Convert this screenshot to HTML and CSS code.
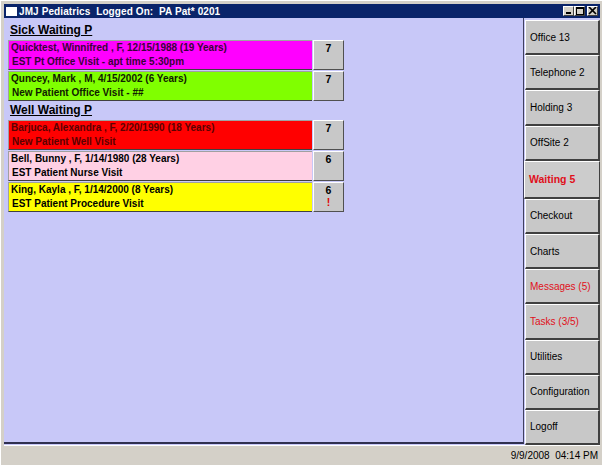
FILE: index.html
```html
<!DOCTYPE html>
<html>
<head>
<meta charset="utf-8">
<link rel="stylesheet" href="styles.css">
</head>
<body>
<div class="window">
  <div class="titlebar">
    <div class="title-left"><span class="appicon"></span><span class="title">JMJ Pediatrics&nbsp; Logged On:&nbsp; PA Pat* 0201</span></div>
    <div class="controls">
      <span class="ctl"><svg width="9" height="8" viewBox="0 0 9 8"><rect x="2" y="5" width="5" height="2" fill="#000"/></svg></span>
      <span class="ctl"><svg width="9" height="8" viewBox="0 0 9 8"><rect x="1.5" y="0.5" width="7" height="7" fill="none" stroke="#000"/><rect x="1" y="0" width="8" height="2" fill="#000"/></svg></span>
      <span class="ctl close"><svg width="9" height="8" viewBox="0 0 9 8"><path d="M1 0 L8 7 M8 0 L1 7" stroke="#000" stroke-width="1.7"/></svg></span>
    </div>
  </div>
  <div class="main">
    <div class="panel">
      <div class="heading">Sick Waiting P</div>
      <div class="row">
        <div class="info magenta"><div class="l1">Quicktest, Winnifred , F, 12/15/1988 (19 Years)</div><div class="l2">EST Pt Office Visit - apt time 5:30pm</div></div>
        <div class="count">7</div>
      </div>
      <div class="row">
        <div class="info green"><div class="l1">Quncey, Mark , M, 4/15/2002 (6 Years)</div><div class="l2">New Patient Office Visit - ##</div></div>
        <div class="count">7</div>
      </div>
      <div class="heading">Well Waiting P</div>
      <div class="row">
        <div class="info red"><div class="l1">Barjuca, Alexandra , F, 2/20/1990 (18 Years)</div><div class="l2">New Patient Well Visit</div></div>
        <div class="count">7</div>
      </div>
      <div class="row">
        <div class="info pink"><div class="l1">Bell, Bunny , F, 1/14/1980 (28 Years)</div><div class="l2">EST Patient Nurse Visit</div></div>
        <div class="count">6</div>
      </div>
      <div class="row">
        <div class="info yellow"><div class="l1">King, Kayla , F, 1/14/2000 (8 Years)</div><div class="l2">EST Patient Procedure Visit</div></div>
        <div class="count">6<span class="bang">!</span></div>
      </div>
    </div>
    <div class="nav">
      <div class="btn">Office 13</div>
      <div class="btn">Telephone 2</div>
      <div class="btn">Holding 3</div>
      <div class="btn">OffSite 2</div>
      <div class="btn active">Waiting 5</div>
      <div class="btn">Checkout</div>
      <div class="btn">Charts</div>
      <div class="btn alert">Messages (5)</div>
      <div class="btn alert">Tasks (3/5)</div>
      <div class="btn">Utilities</div>
      <div class="btn">Configuration</div>
      <div class="btn">Logoff</div>
    </div>
  </div>
  <div class="status"><span>9/9/2008&nbsp; 04:14 PM</span></div>
</div>
</body>
</html>
```
FILE: styles.css
```css
* { box-sizing: border-box; }
html, body { margin: 0; padding: 0; }
body {
  width: 602px;
  height: 465px;
  overflow: hidden;
  background: #d4d0c8;
  font-family: "Liberation Sans", Arial, sans-serif;
}
.window {
  width: 602px;
  height: 465px;
  display: flex;
  flex-direction: column;
  padding: 3px 2px 0 3px;
  background: #d4d0c8;
  border-left: 1px solid #ffffff;
  border-top: 1px solid #ffffff;
}
.titlebar {
  height: 14px;
  background: #0a246a;
  display: flex;
  align-items: center;
  justify-content: space-between;
  padding: 0 2px 0 2px;
  flex: none;
}
.title-left { display: flex; align-items: center; gap: 2px; }
.appicon {
  width: 11px;
  height: 9px;
  background: #ffffff;
  display: inline-block;
}
.title {
  color: #ffffff;
  font-weight: bold;
  font-size: 10px;
  letter-spacing: 0.1px;
}
.controls { display: flex; gap: 0; }
.ctl {
  width: 11px;
  height: 10px;
  background: #d4d0c8;
  border-top: 1px solid #fff;
  border-left: 1px solid #fff;
  border-right: 1px solid #404040;
  border-bottom: 1px solid #404040;
  display: flex;
  align-items: center;
  justify-content: center;
}
.ctl svg { display: block; }
.close { margin-left: 2px; }
.main {
  flex: 1;
  display: flex;
  background: #c8c8f8;
}
.panel {
  width: 520px;
  height: 426px;
  flex: none;
  background: #c8c8f8;
  border-right: 1px solid #404060;
  border-bottom: 2px solid #303050;
  padding: 4px 0 0 4px;
}
.heading {
  font-weight: bold;
  font-size: 12px;
  text-decoration: underline;
  color: #000;
  padding-left: 2px;
  height: 18px;
  line-height: 16px;
}
.row {
  display: flex;
  height: 31px;
}
.info {
  width: 304px;
  height: 30px;
  border-top: 1px solid #a0a0a0;
  border-left: 1px solid #a0a0a0;
  border-bottom: 1px solid #404040;
  padding: 0 0 0 2px;
  font-weight: bold;
  font-size: 10px;
  color: #000;
}
.info .l1 { height: 14px; line-height: 13px; }
.info .l2 { padding-left: 1px; line-height: 14px; }
.magenta { background: #ff00ff; color: #3a003a; }
.green { background: #80ff00; color: #102000; }
.red { background: #ff0000; color: #5a0000; }
.pink { background: #ffd0e4; }
.yellow { background: #ffff00; }
.count {
  width: 31px;
  height: 30px;
  margin-left: 1px;
  background: #c8c8c8;
  border-top: 1px solid #ffffff;
  border-left: 1px solid #ffffff;
  border-right: 1px solid #505050;
  border-bottom: 1px solid #505050;
  font-weight: bold;
  font-size: 10.5px;
  line-height: 13px;
  padding-top: 1px;
  display: flex;
  flex-direction: column;
  align-items: center;
}
.bang { color: #e00000; line-height: 11px; }
.nav {
  flex: 1;
  display: flex;
  flex-direction: column;
  padding-top: 2px;
}
.btn {
  height: 35.2px;
  margin-left: 1px;
  background: #c8c8c8;
  border-top: 1px solid #ffffff;
  border-left: 1px solid #ffffff;
  border-right: 2px solid #404040;
  border-bottom: 2px solid #404040;
  font-size: 10px;
  color: #000;
  display: flex;
  align-items: center;
  padding-left: 4px;
}
.btn.active {
  margin-left: 0;
  height: 38px;
  color: #e0101a;
  font-weight: bold;
  font-size: 10.5px;
  background: #cccccc;
  border-right-width: 1px;
}
.btn.alert { color: #e0101a; }
.status {
  height: 20px;
  flex: none;
  display: flex;
  align-items: center;
  justify-content: flex-end;
  padding-right: 2px;
  font-size: 10px;
  color: #000;
  border-top: 1px solid #ffffff;
}
```
